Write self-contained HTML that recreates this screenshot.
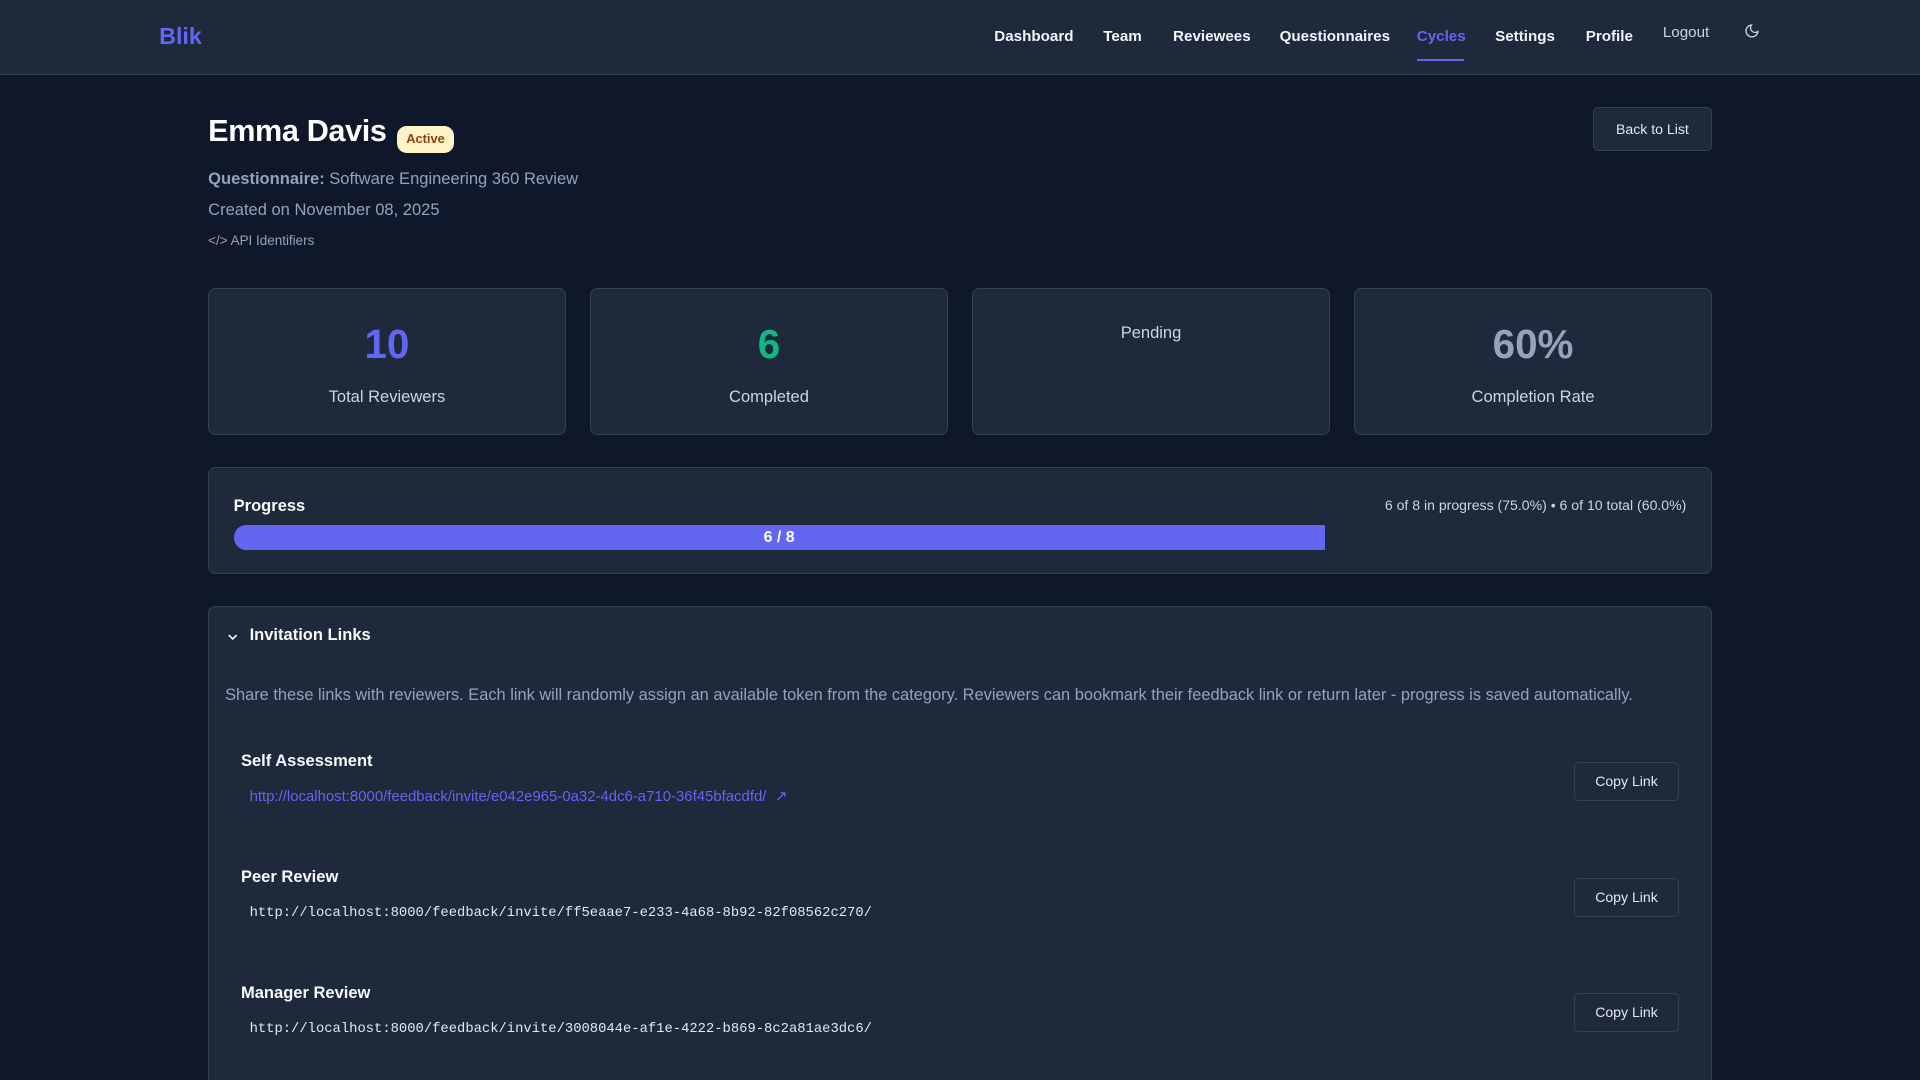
<!DOCTYPE html>
<html><head><meta charset="utf-8"><style>
html{zoom:1.22449;overflow:hidden;height:882px}
*{box-sizing:border-box;margin:0;padding:0}
body{width:1568px;height:882px;overflow:hidden;background:#0f172a;font-family:"Liberation Sans",sans-serif;color:#f1f5f9;position:relative}
.a{position:absolute;white-space:nowrap}
nav{position:absolute;left:0;top:0;width:1568px;height:61px;background:#1e293b;border-bottom:1px solid #334155}
.nl{position:absolute;top:23px;font-size:12.4px;font-weight:bold;color:#f1f5f9}
.card{position:absolute;background:#1e293b;border:1px solid #334155;border-radius:6px}
.stat{top:235px;width:292px;height:120px;text-align:center}
.num{position:absolute;left:0;right:0;top:26px;font-size:33px;font-weight:bold}
.lbl{position:absolute;left:0;right:0;top:80px;font-size:13.5px;color:#cbd5e1}
.btn{position:absolute;border:1px solid #334155;border-radius:4px;background:#1e293b;color:#e2e8f0;font-size:11.5px;text-align:center}
.t{font-size:13.5px;font-weight:bold;color:#f8fafc}
.mono{font-family:"Liberation Mono",monospace;font-size:11.3px;color:#e2e8f0}
</style></head><body>
<nav>
<div class="a" style="left:130px;top:19px;font-size:19px;font-weight:bold;color:#6366f1">Blik</div>
<div class="nl" style="left:812px">Dashboard</div>
<div class="nl" style="left:901px">Team</div>
<div class="nl" style="left:958px">Reviewees</div>
<div class="nl" style="left:1045px">Questionnaires</div>
<div class="nl" style="left:1157px;color:#6366f1">Cycles</div>
<div class="a" style="left:1157px;top:48px;width:39px;height:2px;background:#6366f1"></div>
<div class="nl" style="left:1221px">Settings</div>
<div class="nl" style="left:1295px">Profile</div>
<div class="nl" style="left:1358px;top:20px;font-weight:normal;color:#cbd5e1">Logout</div>
<svg class="a" style="left:1424px;top:19px" width="13" height="13" viewBox="0 0 24 24" fill="none" stroke="#cbd5e1" stroke-width="2"><path d="M21 12.8A9 9 0 1 1 11.2 3a7 7 0 0 0 9.8 9.8z"/></svg>
</nav>
<div class="a" style="left:170px;top:93px;font-size:25px;font-weight:bold;color:#fff;letter-spacing:-0.3px">Emma Davis</div>
<div class="a" style="left:324px;top:103px;width:47px;height:22px;border-radius:8px;background:#fef3c7;color:#92400e;font-size:10.5px;font-weight:bold;text-align:center;line-height:22px">Active</div>
<div class="btn" style="left:1301px;top:87px;width:97px;height:36px;line-height:35px">Back to List</div>
<div class="a" style="left:170px;top:138px;font-size:13.5px;color:#94a3b8"><b>Questionnaire:</b> Software Engineering 360 Review</div>
<div class="a" style="left:170px;top:163px;font-size:13.5px;color:#94a3b8">Created on November 08, 2025</div>
<div class="a" style="left:170px;top:190px;font-size:11px;color:#94a3b8">&lt;/&gt; API Identifiers</div>
<div class="card stat" style="left:170px"><div class="num" style="color:#6366f1">10</div><div class="lbl">Total Reviewers</div></div>
<div class="card stat" style="left:482px"><div class="num" style="color:#10b981">6</div><div class="lbl">Completed</div></div>
<div class="card stat" style="left:794px"><div class="lbl" style="top:28px">Pending</div></div>
<div class="card stat" style="left:1106px"><div class="num" style="color:#94a3b8">60%</div><div class="lbl">Completion Rate</div></div>
<div class="card" style="left:170px;top:381px;width:1228px;height:88px">
<div class="a t" style="left:20px;top:23px">Progress</div>
<div class="a" style="right:20px;top:24px;font-size:11.5px;color:#cbd5e1">6 of 8 in progress (75.0%) • 6 of 10 total (60.0%)</div>
<div class="a" style="left:20px;top:47px;width:891px;height:20px;background:#6366f1;border-radius:10px 0 0 10px;text-align:center;color:#fff;font-size:13px;font-weight:bold;line-height:21px">6 / 8</div>
</div>
<div class="card" style="left:170px;top:495px;width:1228px;height:49px;border-radius:6px 6px 0 0">
<svg class="a" style="left:14px;top:19px" width="11" height="11" viewBox="0 0 24 24" fill="none" stroke="#f1f5f9" stroke-width="3"><path d="M5 9l7 7 7-7"/></svg>
<div class="a t" style="left:33px;top:15px">Invitation Links</div>
</div>
<div class="a" style="left:170px;top:543px;width:1228px;height:339px;background:#1e293b;border:1px solid #334155;border-top:none;border-bottom:none">
<div class="a" style="left:13px;top:17px;font-size:13.4px;color:#94a3b8">Share these links with reviewers. Each link will randomly assign an available token from the category. Reviewers can bookmark their feedback link or return later - progress is saved automatically.</div>
<div class="a t" style="left:26px;top:70px">Self Assessment</div>
<div class="a" style="left:33px;top:100px;font-size:12.2px;color:#6366f1">http://localhost:8000/feedback/invite/e042e965-0a32-4dc6-a710-36f45bfacdfd/ &nbsp;↗</div>
<div class="btn" style="left:1115px;top:79px;width:85px;height:32px;line-height:31px">Copy Link</div>
<div class="a t" style="left:26px;top:165px">Peer Review</div>
<div class="a mono" style="left:33px;top:196px">http://localhost:8000/feedback/invite/ff5eaae7-e233-4a68-8b92-82f08562c270/</div>
<div class="btn" style="left:1115px;top:174px;width:85px;height:32px;line-height:31px">Copy Link</div>
<div class="a t" style="left:26px;top:260px">Manager Review</div>
<div class="a mono" style="left:33px;top:291px">http://localhost:8000/feedback/invite/3008044e-af1e-4222-b869-8c2a81ae3dc6/</div>
<div class="btn" style="left:1115px;top:268px;width:85px;height:32px;line-height:31px">Copy Link</div>
</div>
</body></html>
